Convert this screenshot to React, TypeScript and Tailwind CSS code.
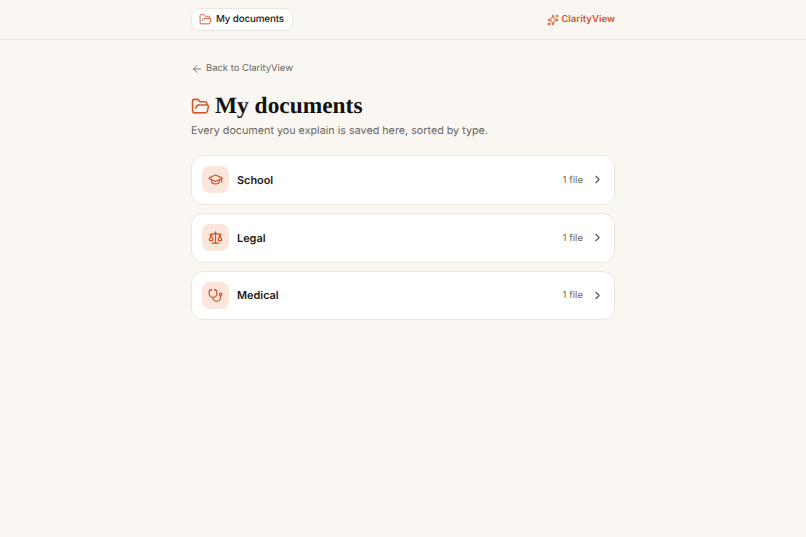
import { ArrowLeft, ChevronRight, FolderOpen, GraduationCap, Scale, Sparkles, Stethoscope } from "lucide-react";

const categories = [
  { name: "School", icon: GraduationCap },
  { name: "Legal", icon: Scale },
  { name: "Medical", icon: Stethoscope },
];

export default function App() {
  return (
    <div className="min-h-screen bg-[#faf7f2] font-['Inter',sans-serif] text-[#1c1917] antialiased [text-rendering:geometricPrecision]">
      {/* Header */}
      <header className="border-b border-[#ebe7e0]">
        <div className="mx-auto flex h-[39px] w-[424px] items-center justify-between">
          <a className="flex h-[23px] items-center gap-[4px] rounded-lg border border-[#ebe7e0] bg-white pr-[8px] pl-[7px] text-[9.8px] leading-[16px] font-medium tracking-[-0.015em]">
            <FolderOpen className="h-[13px] w-[13px] text-[#d4552a]" strokeWidth={1.75} />
            <span className="pt-px">My documents</span>
          </a>
          <a className="flex items-center gap-[2px] text-[9.6px] leading-[16px] font-semibold text-[#d4552a]">
            <Sparkles className="h-[12px] w-[12px]" strokeWidth={2} />
            <span className="pt-px">ClarityView</span>
          </a>
        </div>
      </header>

      <main className="mx-auto w-[424px]">
        <a className="mt-[22px] flex items-center gap-[3px] text-[9.45px] leading-[14px] text-[#6b6660]">
          <ArrowLeft className="h-[12px] w-[12px]" strokeWidth={1.75} />
          Back to ClarityView
        </a>

        <div className="mt-[15px] flex items-center gap-[5px]">
          <FolderOpen className="h-[19px] w-[19px] text-[#d4552a]" strokeWidth={2} />
          <h1 className="font-['Liberation_Serif',serif] text-[23.4px] leading-[30px] font-bold text-[#141210]">My documents</h1>
        </div>
        <p className="mt-[2px] text-[10.76px] leading-[16px] text-[#6b6660]">
          Every document you explain is saved here, sorted by type.
        </p>

        <div className="mt-[16px] flex flex-col gap-2">
          {categories.map((c) => (
            <div
              key={c.name}
              className="flex h-[49.8px] items-center rounded-xl border border-[#ebe7e0] bg-white pr-[10px] pl-[10px]"
            >
              <div className="flex h-[27px] w-[27px] items-center justify-center rounded-lg bg-[#fbe6dc]">
                <c.icon className="h-[15px] w-[15px] text-[#d4552a]" strokeWidth={2} />
              </div>
              <span className="ml-2 text-[10.9px] leading-[16px] font-semibold">{c.name}</span>
              <span className="ml-auto pt-[2px] text-[9.6px] leading-[16px] text-[#6b6660]">1 file</span>
              <ChevronRight className="ml-[8px] h-[13px] w-[13px] text-[#57534e]" strokeWidth={2} />
            </div>
          ))}
        </div>
      </main>
    </div>
  );
}
